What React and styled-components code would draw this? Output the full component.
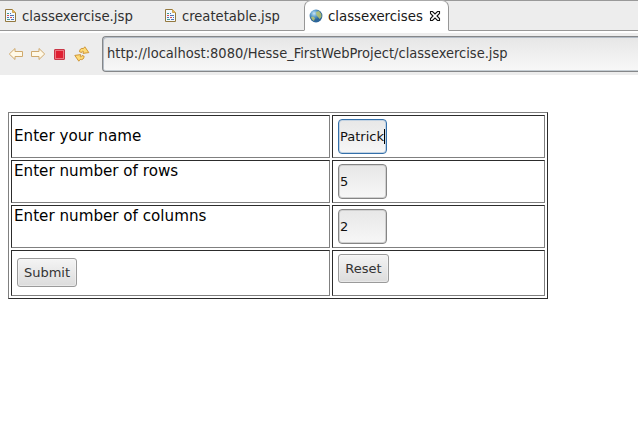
import React from "react";
import styled, { createGlobalStyle } from "styled-components";

const Global = createGlobalStyle`
  *, *::before, *::after { box-sizing: border-box; }
  body { margin: 0; background: #fff; overflow: hidden; font-family: "DejaVu Sans", sans-serif; }
`;
const Window = styled.div`
  width: 638px; height: 421px; display: flex; flex-direction: column; background: #fff; overflow: hidden;
`;
const TabBar = styled.nav`
  display: flex; flex: none; height: 33px; background: #ededed;
  border-top: 1px solid #999; border-bottom: 2px solid #fff;
`;
const Tab = styled.div`
  display: flex; align-items: center; flex: none; height: 30px;
  width: ${(p) => p.$width}px; padding: 0 0 0 ${(p) => p.$pad}px;
  border-bottom: 1px solid #979797;
  color: #303030; white-space: nowrap;
`;
const ActiveTab = styled(Tab)`
  background: #fff; color: #1a1a1a;
  border: 1px solid #979797; border-top-color: #aaa; border-bottom-color: #fff;
  border-radius: 7px 7px 0 0; margin-top: -1px; height: 31px;
`;
const TabFill = styled.div`
  flex: 1; height: 30px; border-bottom: 1px solid #979797;
`;
const TabLabel = styled.span`
  font: ${(p) => p.$size || 14.75}px/20px "DejaVu Sans Condensed", "DejaVu Sans", sans-serif;
  font-stretch: condensed;
  margin-left: ${(p) => p.$gap}px;
  margin-right: ${(p) => p.$after || 0}px;
`;
const Toolbar = styled.div`
  display: flex; flex: none; height: 42px; background: #ededed; padding: 3px 0 0 8px;
`;
const Tools = styled.div`
  display: flex; gap: 6px; width: 94px; padding-top: 10px; flex: none;
`;
const Address = styled.div`
  flex: 1; height: 36px; padding: 0 0 2px 3px; display: flex; align-items: center;
  border: 1px solid #858789; border-right: 0; border-radius: 4px 0 0 4px;
  background: linear-gradient(#e6e6e6, #f8f8f8); box-shadow: inset 1px 1px #b4bcc6, inset 0 -1px #c5cdd3;
  color: #333; white-space: nowrap;
`;
const Page = styled.main`
  padding: 37px 0 0 8px;
`;
const Grid = styled.form`
  display: grid; width: 540px; height: 187px; margin: 0; padding: 2px; gap: 2px;
  grid-template-columns: 319px 213px; grid-template-rows: 43px 43px 43px 46px;
  border: 1px solid; border-color: #808080 #2c2c2c #2c2c2c #808080;
`;
const Cell = styled.div`
  display: flex; align-items: ${(p) => (p.$middle ? "center" : "flex-start")};
  border: 1px solid; border-color: #2c2c2c #808080 #808080 #2c2c2c;
  padding: ${(p) => p.$padding || "1px 2px 0"};
`;
const Label = styled.label`
  font-size: 15.15px; line-height: 19px; color: #000;
`;
const Field = styled.div`
  width: 49px; height: 35px; padding: 0 0 1px 1px; display: flex; align-items: center;
  font-size: 13px; color: #111; white-space: nowrap;
  border: ${(p) => (p.$focused ? "1px solid #3470aa" : "1px solid #858585")}; border-radius: 4px;
  background: linear-gradient(#e7e7e7, #f7f7f7);
  box-shadow: inset 0 0 0 1px ${(p) => (p.$focused ? "#c3d3e3" : "#d0d0d0")};
`;
const Caret = styled.span`
  width: 1px; height: 15px; background: #000; flex: none;
`;
const Button = styled.button`
  width: ${(p) => p.$width}px; height: 29px; padding: 0;
  font: 13px "DejaVu Sans", sans-serif; color: #333;
  border: 1px solid #9a9a9a; border-radius: 3px;
  background: linear-gradient(#f4f4f4, #dcdcdc); box-shadow: inset 0 0 0 1px rgba(255,255,255,.35);
`;

const FileIcon = () => (
  <svg width="12" height="15" viewBox="0 0 12 15">
    <path d="M.5 1.5H7.5L10.5 4.5V13.5H.5Z" fill="#f2f9ff" stroke="#94793f" />
    <path d="M7.5 1.5V4.5H10.5Z" fill="#e5b75d" stroke="#d0a552" />
    <path d="M2 5.5H4M2 11.5H5" stroke="#3f9a91" />
    <path d="M5 5.5H6M5 7.5H9M2 9.5H4" stroke="#5271b5" />
    <path d="M2 7.5H4M5 9.5H7" stroke="#d04c5a" />
    <path d="M8 9.5H9M6 11.5H9" stroke="#5271b5" />
  </svg>
);
const ArrowIcon = ({ right }) => (
  <svg width="16" height="16" viewBox="0 0 16 16">
    <path transform={right ? "translate(16 0) scale(-1 1)" : undefined}
      d="M1.3 8 7 2.5V5.5H14.5V10.5H7V13.5Z" fill="#fff9e8" stroke="#cfa96d" strokeLinejoin="round" />
  </svg>
);
const StopIcon = () => (
  <svg width="16" height="16" viewBox="0 0 16 16">
    <rect x="2.5" y="3.5" width="10" height="10" rx=".5" fill="#ec7580" stroke="#c93646" />
    <rect x="4" y="5" width="7" height="7" fill="#e01f32" />
  </svg>
);
const RefreshIcon = () => (
  <svg width="16" height="16" viewBox="0 0 16 16">
    <g fill="#ffdc78" stroke="#c98d2b" strokeWidth=".9" strokeLinejoin="round">
      <path d="M5.5 5.8C5.5 3.2 7.3 1.8 9.4 2.6L10.8.8 14.8 6.6 9 7.4 9.4 5.4C8.6 4.9 7.8 5.2 7.6 6.5Z" />
      <path d="M5.5 5.8C5.5 3.2 7.3 1.8 9.4 2.6L10.8.8 14.8 6.6 9 7.4 9.4 5.4C8.6 4.9 7.8 5.2 7.6 6.5Z" transform="rotate(180 7.8 8)" />
    </g>
  </svg>
);
const GlobeIcon = () => (
  <svg width="14" height="14" viewBox="0 0 14 14">
    <defs><radialGradient id="sea" cx=".35" cy=".3"><stop stopColor="#c9e6f7" /><stop offset=".55" stopColor="#5a9ccc" /><stop offset="1" stopColor="#2c6599" /></radialGradient></defs>
    <circle cx="7" cy="7" r="6.4" fill="url(#sea)" />
    <path d="M2 8 4 7.5 6 9 5 12 3 10.5ZM7 3 10 2 12.3 5 12.5 8 10.5 10 9 8 7.5 6.5Z" fill="#bcc66e" opacity=".85" />
  </svg>
);
const CloseIcon = () => (
  <svg width="12" height="12" viewBox="0 0 12 12">
    <path d="M1.5 1.5H3.5L6 4 8.5 1.5H10.5V3.5L8 6 10.5 8.5V10.5H8.5L6 8 3.5 10.5H1.5V8.5L4 6 1.5 3.5Z" fill="#fff" stroke="#111" strokeWidth="1.1" />
  </svg>
);

export default function App() {
  return (
    <Window>
      <Global />
      <TabBar>
        <Tab $width={165} $pad={5}><FileIcon /><TabLabel $gap={5}>classexercise.jsp</TabLabel></Tab>
        <Tab $width={139} $pad={0}><FileIcon /><TabLabel $gap={5} $size={14.6}>createtable.jsp</TabLabel></Tab>
        <ActiveTab $width={145} $pad={4}><GlobeIcon /><TabLabel $gap={5} $size={14.8} $after={6}>classexercises</TabLabel><CloseIcon /></ActiveTab>
        <TabFill />
      </TabBar>
      <Toolbar>
        <Tools><ArrowIcon /><ArrowIcon right /><StopIcon /><RefreshIcon /></Tools>
        <Address><TabLabel $gap={1} $size={14.52}>http://localhost:8080/Hesse_FirstWebProject/classexercise.jsp</TabLabel></Address>
      </Toolbar>
      <Page>
        <Grid>
          <Cell $middle $padding="0 2px 1px"><Label>Enter your name</Label></Cell>
          <Cell $padding="3px 5px"><Field $focused>Patrick<Caret /></Field></Cell>
          <Cell><Label>Enter number of rows</Label></Cell>
          <Cell $padding="3px 5px"><Field>5</Field></Cell>
          <Cell><Label>Enter number of columns</Label></Cell>
          <Cell $padding="3px 5px"><Field>2</Field></Cell>
          <Cell $padding="7px 5px"><Button type="button" $width={60}>Submit</Button></Cell>
          <Cell $padding="3px 5px"><Button type="reset" $width={51}>Reset</Button></Cell>
        </Grid>
      </Page>
    </Window>
  );
}
